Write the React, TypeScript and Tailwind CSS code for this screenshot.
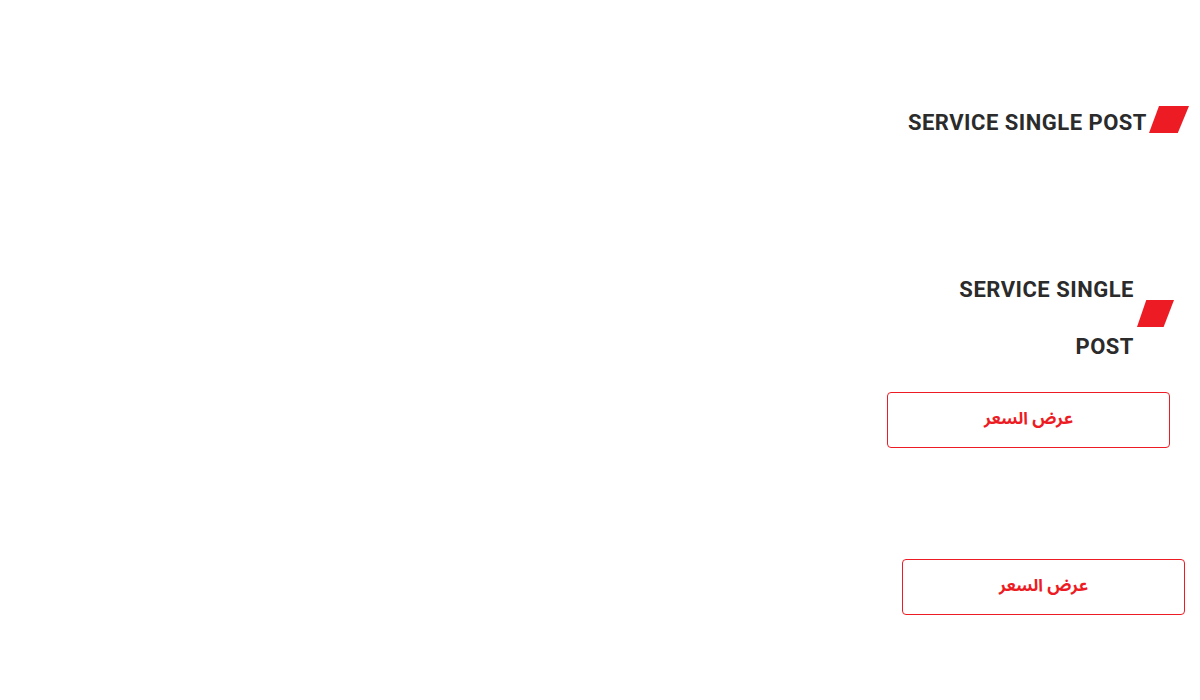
import React from "react";

const Slant = ({ w = 40, h = 27 }: { w?: number; h?: number }) => (
  <svg width={w} height={h} viewBox={`0 0 ${w} ${h}`} className="block shrink-0">
    <polygon points={`${w * 0.25},0 ${w},0 ${w * 0.72},${h} 0,${h}`} fill="#ed1c24" />
  </svg>
);

const Btn = () => (
  <button
    className="w-[283px] h-[56px] rounded-[4px] border border-[#ed1c24] bg-white flex items-center justify-center text-[#ed1c24] text-[17px] font-bold"
    style={{ fontFamily: '"Noto Sans Arabic", "DejaVu Sans", sans-serif' }}
    dir="rtl"
  >
    عرض السعر
  </button>
);

export default function App() {
  const title = { fontFamily: 'Roboto, "Liberation Sans", sans-serif' };
  return (
    <div className="w-[1200px] h-[700px] bg-white overflow-hidden flex flex-col items-end">
      <div className="mt-[106px] mr-[11px] flex items-start gap-[2px]">
        <h2 className="pt-[3px] text-[22px] font-bold text-[#2b2b2b] leading-[27px] tracking-[0.5px]" style={title}>
          SERVICE SINGLE POST
        </h2>
        <Slant w={40} h={27} />
      </div>

      <div className="mt-[125px] mr-[26px] flex items-center gap-[3px]">
        <h2
          className="w-[180px] text-right text-[22px] font-bold text-[#2b2b2b] leading-[57px] tracking-[0.5px]"
          style={title}
        >
          SERVICE SINGLE POST
        </h2>
        <div className="mb-[10px]">
          <Slant w={37} h={27} />
        </div>
      </div>

      <div className="mt-[17px] mr-[30px]">
        <Btn />
      </div>
      <div className="mt-[111px] mr-[15px]">
        <Btn />
      </div>
    </div>
  );
}
